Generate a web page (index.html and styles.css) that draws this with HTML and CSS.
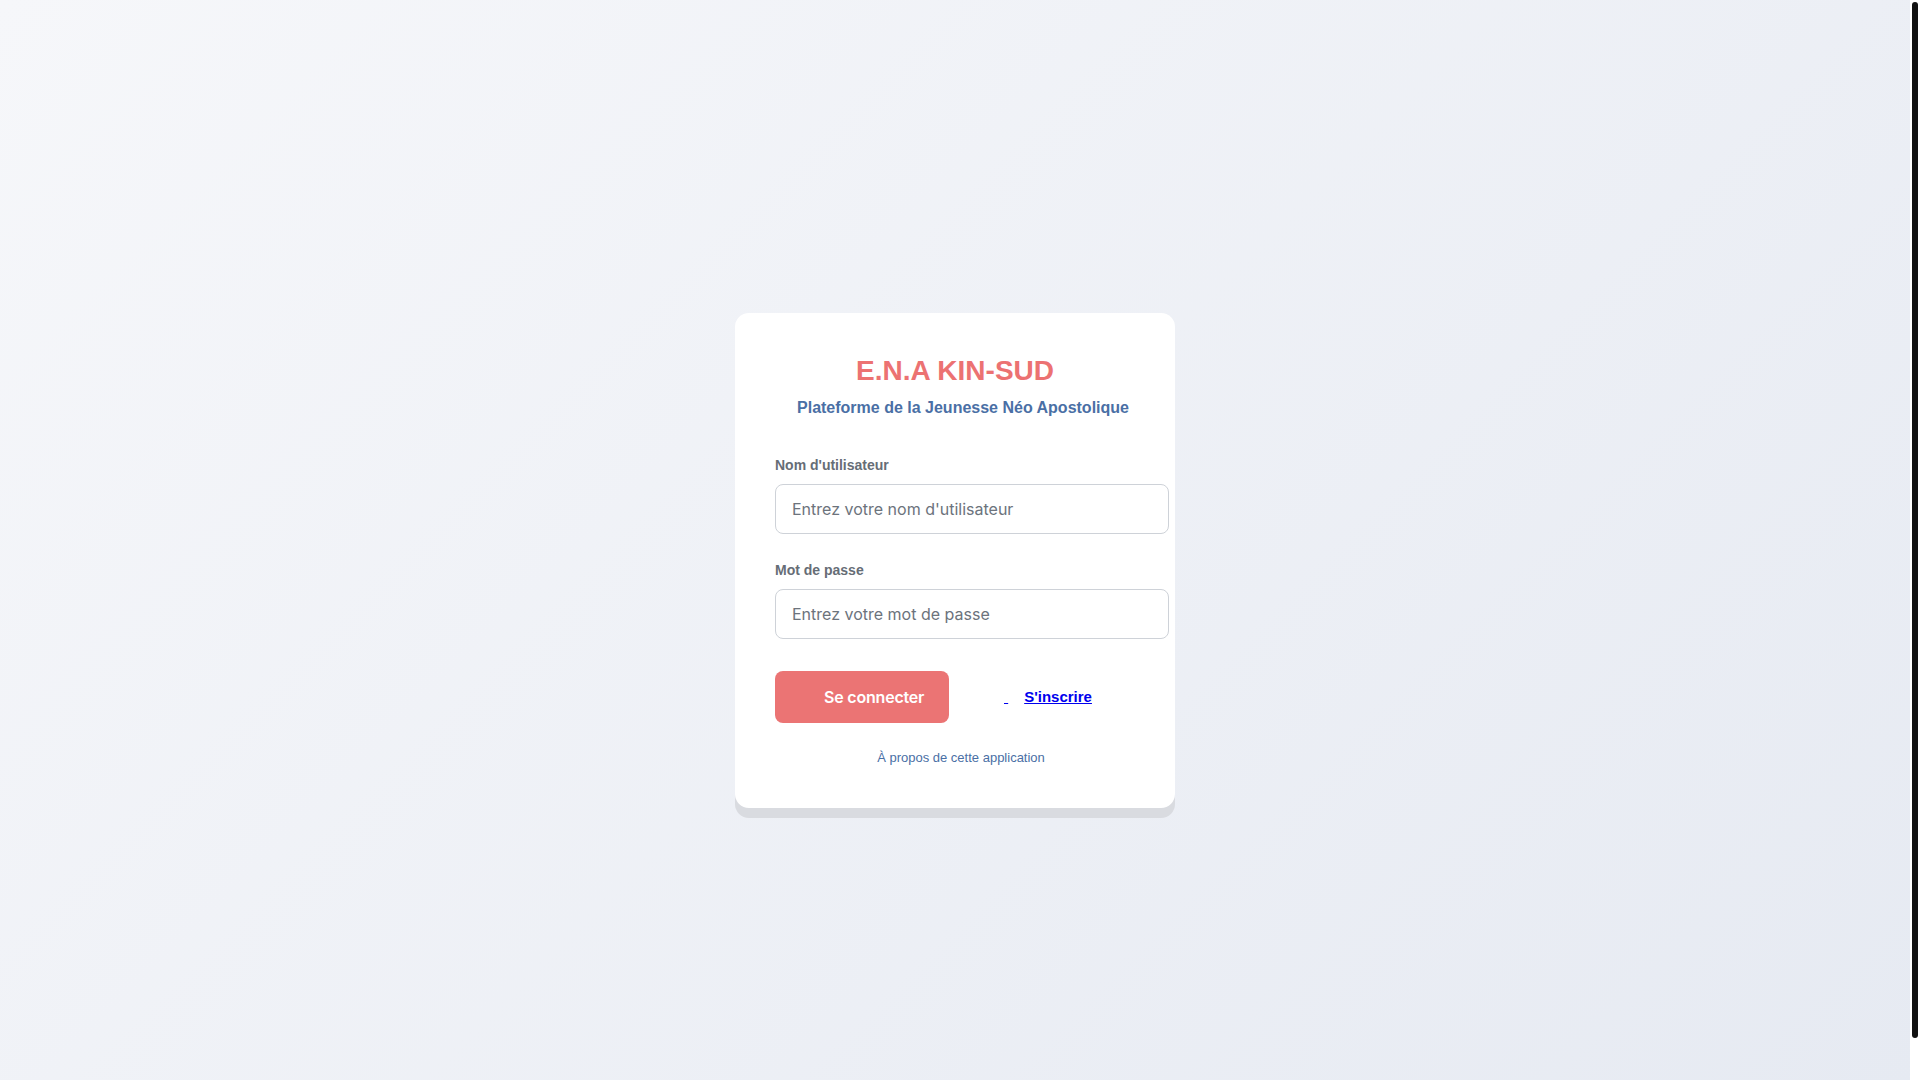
FILE: index.html
```html
<!DOCTYPE html>
<html lang="fr">
<head>
<meta charset="utf-8">
<title>E.N.A KIN-SUD - Connexion</title>
<link rel="stylesheet" href="styles.css">
</head>
<body>
  <main class="page">
    <div class="card">
      <h1 class="title">E.N.A KIN-SUD</h1>
      <p class="subtitle"><i class="ico"></i>Plateforme de la Jeunesse Néo Apostolique</p>
      <form class="form">
        <div class="group">
          <label class="label" for="username">Nom d'utilisateur</label>
          <input class="input" id="username" type="text" placeholder="Entrez votre nom d'utilisateur">
        </div>
        <div class="group">
          <label class="label" for="password">Mot de passe</label>
          <input class="input" id="password" type="password" placeholder="Entrez votre mot de passe">
        </div>
        <div class="actions">
          <button class="btn" type="button">Se connecter</button>
          <a class="register" href="#"><i class="ico"></i> <span class="register-text">S'inscrire</span></a>
        </div>
      </form>
      <a class="about" href="#"><i class="ico"></i>À propos de cette application</a>
    </div>
  </main>
  <div class="scrollbar"><div class="thumb"></div></div>
</body>
</html>
```
FILE: styles.css
```css
html {
  background: linear-gradient(135deg, #f6f7fa 0%, #e6eaf2 100%);
  height: 100%;
}

body {
  margin: 0;
  height: 100vh;
  overflow: hidden;
  display: flex;
  font-family: "Liberation Sans", Arial, sans-serif;
}

.page {
  flex: 1;
  box-sizing: border-box;
  padding-top: 40px;
  display: flex;
  align-items: center;
  justify-content: center;
}

.scrollbar {
  width: 10px;
  flex: none;
  background: #ffffff;
  box-sizing: border-box;
  padding: 2px 2px 42px 2px;
  display: flex;
}

.thumb {
  flex: 1;
  background: #111111;
  border-radius: 3px;
}

.card {
  width: 360px;
  padding: 42px 40px 43px;
  background: #ffffff;
  border-radius: 14px;
  box-shadow: 0 10px 0 #d9dbe0;
  display: flex;
  flex-direction: column;
}

.title {
  margin: 0 0 12px;
  font-size: 28px;
  font-weight: 700;
  line-height: normal;
  color: #ec7272;
  text-align: center;
}

.subtitle {
  margin: 0 0 40px;
  padding-left: 16px;
  font-size: 16px;
  font-weight: 700;
  line-height: normal;
  color: #4a6fa5;
  text-align: center;
}

.ico {
  display: inline-block;
  width: 0;
}

.form {
  display: flex;
  flex-direction: column;
}

.group {
  display: flex;
  flex-direction: column;
  margin-bottom: 28px;
}

.label {
  font-size: 14px;
  font-weight: 700;
  line-height: 16px;
  color: #666d76;
  margin-bottom: 11px;
}

.input {
  width: 100%;
  box-sizing: content-box;
  padding: 14px 16px;
  line-height: 20px;
  height: 20px;
  font-family: Inter, "Liberation Sans", sans-serif;
  font-size: 16px;
  color: #212529;
  background: #ffffff;
  border: 1px solid #ced2d8;
  border-radius: 8px;
  outline: none;
}

.input::placeholder {
  color: #6c737c;
}

.actions {
  margin-top: 4px;
  display: flex;
  align-items: center;
}

.btn {
  width: 174px;
  height: 52px;
  flex: none;
  padding: 0 0 0 49px;
  text-align: left;
  border: none;
  border-radius: 8px;
  background: #eb7474;
  color: #ffffff;
  font-family: Inter, "Liberation Sans", sans-serif;
  font-size: 16px;
  font-weight: 600;
  letter-spacing: -0.2px;
  cursor: pointer;
}

.register {
  margin-left: 55px;
  font-size: 15px;
  font-weight: 700;
  color: #0000ee;
  text-decoration: underline;
}

.register-text {
  margin-left: 16px;
}

.about {
  margin-top: 27px;
  padding-left: 12px;
  align-self: center;
  font-size: 13px;
  line-height: 15px;
  color: #4a6fa5;
  text-decoration: none;
}
```
